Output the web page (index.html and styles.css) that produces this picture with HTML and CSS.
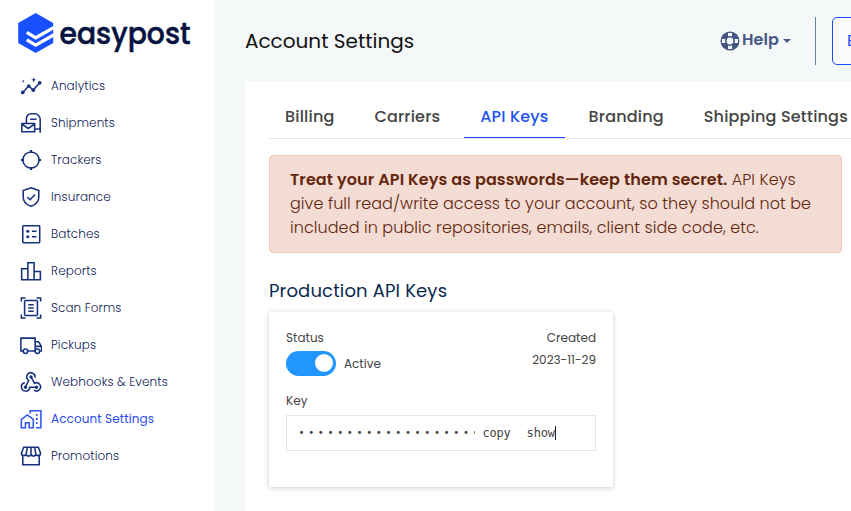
FILE: index.html
```
<!DOCTYPE html>
<html lang="en">
<head>
<meta charset="utf-8">
<title>Account Settings</title>
<link rel="stylesheet" href="styles.css">
</head>
<body>
<div class="app">
  <aside class="sidebar">
    <svg class="logo" width="196" height="56" viewBox="0 0 196 56">
      <path fill="#184fff" d="M35.7 13 53.2 23V43L35.7 53 18.2 43V23Z"/>
      <path fill="none" stroke="#fff" stroke-width="3.3" d="M26.8 32.4 35.7 37.8 54 27.4M26.8 39.9 35.7 45.2 54 34.8"/>
      <text class="wordmark" x="59.5" y="43.5" textLength="131" lengthAdjust="spacingAndGlyphs">easypost</text>
    </svg>
    <nav class="nav">
      <a class="item"><svg class="icon" viewBox="0 0 24 24"><path d="M3 19 9.5 12 14.5 16.500 21.500 8.500"/><g class="solid"><circle cx="3" cy="19" r="2"/><circle cx="9.5" cy="12" r="2"/><circle cx="14.5" cy="16.5" r="2"/><circle cx="21.5" cy="8.5" r="2"/><path d="m15 2.500.8 2 2 .8-2 .8-.8 2-.8-2-2-.8 2-.8ZM3.500 5l.5 1.200 1.200.5L4 7.200 3.500 8.400 3 7.200 1.800 6.700 3 6.200Z"/></g></svg><span>Analytics</span></a>
      <a class="item"><svg class="icon" viewBox="0 0 24 24"><path d="M7 12V7a5 5 0 0 1 5-5h4a6 6 0 0 1 6 6v14.500M11 8h7M16 18.500h6M2 12.500h14v9H2ZM2.500 13.500 9 18l6.500-4.500"/></svg><span>Shipments</span></a>
      <a class="item"><svg class="icon" viewBox="0 0 24 24"><circle cx="12" cy="12" r="8.800"/><path stroke-width="2.400" d="M12 1v3M12 20v3M1 12h3M20 12h3"/></svg><span>Trackers</span></a>
      <a class="item"><svg class="icon" viewBox="0 0 24 24"><path d="m12 2 8.500 3v7c0 5-3.500 8.500-8.500 10.200C7 20.500 3.500 17 3.500 12V5ZM8 12l3 3 5.500-5.800"/></svg><span>Insurance</span></a>
      <a class="item"><svg class="icon" viewBox="0 0 24 24"><rect x="3" y="3" width="18.500" height="18.500" rx="1"/><path d="M13 9h5M13 15h5"/><g class="solid"><circle cx="8.500" cy="9" r="1.700"/><circle cx="8.500" cy="15" r="1.700"/></g></svg><span>Batches</span></a>
      <a class="item"><svg class="icon" viewBox="0 0 24 24"><path d="M1.800 9.500h6.800v12H1.800ZM8.600 3h6.800v18.500H8.600ZM15.400 12.500h6.800v9h-6.800Z"/></svg><span>Reports</span></a>
      <a class="item"><svg class="icon" viewBox="0 0 24 24"><path d="M1.500 5V1H6M18 1h4.500v4M1.500 19v4H6M18 23h4.500v-4"/><rect x="5" y="3.800" width="14" height="16.400" rx="1"/><path d="M9 8.500h6M9 12h6M9 15.500h6"/></svg><span>Scan Forms</span></a>
      <a class="item"><svg class="icon" viewBox="0 0 24 24"><path d="M3.800 18.500H1V4.500h15.500v14H8.500M16.500 8.500h3.700l3.300 5v5h-2M16.500 13.500h7"/><circle cx="6" cy="18.800" r="2.400"/><circle cx="19" cy="18.800" r="2.400"/></svg><span>Pickups</span></a>
      <a class="item"><svg class="icon" viewBox="0 0 24 24"><path d="M16.300 7.200a4.500 4.500 0 1 0-6.800 3L6 17.500M12 6.500l3.800 6.800a4.500 4.500 0 1 1-.6 7.600M5.200 12.800a4.600 4.600 0 1 0 5.500 5h7.300"/><g class="solid"><circle cx="12" cy="6.500" r="1.800"/><circle cx="6" cy="17.700" r="1.800"/><circle cx="18" cy="17.700" r="1.800"/></g></svg><span>Webhooks &amp; Events</span></a>
      <a class="item active"><svg class="icon" viewBox="0 0 24 24"><path d="M1.500 21.500v-9L8 7.500l6.500 5v9H10v-5.500H6v5.500ZM11 6V3h11.800v18.500H17.500"/><path stroke-width="2" d="M18.300 6.500v2M18.300 11v2M18.300 15.500v2"/></svg><span>Account Settings</span></a>
      <a class="item"><svg class="icon" viewBox="0 0 24 24"><path d="M3 11.500v10h18v-10M4 2.500h16l2.300 6a2.500 2.500 0 0 1-5.100 1 2.600 2.600 0 0 1-5.200 0 2.600 2.600 0 0 1-5.200 0 2.500 2.500 0 0 1-5.100-1ZM8 2.500l-1.200 7M12 2.500v7M16 2.500l1.200 7"/></svg><span>Promotions</span></a>
    </nav>
  </aside>
  <main class="main">
    <header class="topbar">
      <h1>Account Settings</h1>
      <div class="help">
        <svg width="20" height="20" viewBox="0 0 20 20"><circle cx="10" cy="10" r="9.500" fill="#465783"/><path stroke="#f4f8f9" stroke-width="4" d="M10 2v4M10 14v4M2 10h4M14 10h4"/><circle cx="10" cy="10" r="4.200" fill="#f4f8f9" stroke="#465783" stroke-width="1.600"/></svg>
        <span>Help</span>
        <i class="caret"></i>
      </div>
      <div class="divider"></div>
      <div class="button">E</div>
    </header>
    <section class="panel">
      <div class="tabs">
        <a class="tab">Billing</a>
        <a class="tab">Carriers</a>
        <a class="tab selected">API Keys</a>
        <a class="tab">Branding</a>
        <a class="tab">Shipping Settings</a>
      </div>
      <div class="alert"><strong>Treat your API Keys as passwords—keep them secret.</strong> API Keys give full read/write access to your account, so they should not be included in public repositories, emails, client side code, etc.</div>
      <h2>Production API Keys</h2>
      <div class="card">
        <div class="row">
          <div>
            <div>Status</div>
            <div class="switch-row"><span class="switch"></span><span>Active</span></div>
          </div>
          <div class="created"><div>Created</div><div class="date">2023-11-29</div></div>
        </div>
        <div class="key-label">Key</div>
        <div class="key">
          <span class="dots">•••••••••••••••••••</span>
          <span class="copy">copy</span>
          <span class="show">show</span>
        </div>
      </div>
    </section>
  </main>
</div>
</body>
</html>
```
FILE: styles.css
```
* { box-sizing: border-box; }
body {
  margin: 0;
  font-family: Poppins, Inter, "Open Sans", sans-serif;
  background: #f4f8f9;
  color: #444;
  overflow: hidden;
}
.app { display: flex; width: 851px; height: 511px; overflow: hidden; }
.sidebar { width: 214px; flex: none; background: #fff; }
.logo { display: block; }
.wordmark { font-size: 31px; font-weight: 500; fill: #061340; stroke: #061340; stroke-width: .5px; }
.nav { padding-top: 11.5px; }
.item {
  display: flex;
  align-items: center;
  height: 37px;
  padding-left: 20px;
  gap: 9px;
  font-size: 12px;
  font-weight: 300;
  letter-spacing: .1px;
  color: #101c58;
  white-space: nowrap;
}
.icon {
  width: 22px;
  height: 22px;
  flex: none;
  fill: none;
  stroke: #16307c;
  stroke-width: 1.7;
}
.icon .solid { fill: #16307c; stroke: none; }
.item.active { color: #2a4bf5; font-weight: 400; }
.item.active .icon { stroke: #3157f5; }

.main { flex: 1; min-width: 0; padding-left: 31px; overflow: hidden; }
.topbar { display: flex; height: 81px; padding-top: 17px; }
h1 {
  margin: 0;
  width: 475px;
  flex: none;
  font-size: 20px;
  font-weight: 400;
  line-height: 48px;
  color: #111;
}
.help {
  display: flex;
  align-items: center;
  width: 95px;
  height: 48px;
  flex: none;
  font-size: 16px;
  font-weight: 600;
  letter-spacing: .1px;
  line-height: 46px;
  color: #465783;
}
.help span { margin-left: 2px; height: 48px; }
.caret {
  margin-left: 4px;
  border: 4.5px solid transparent;
  border-top-color: #465783;
  border-bottom: 0;
}
.divider { width: 1px; height: 48px; flex: none; background: #6b80ab; }
.button {
  width: 120px;
  height: 48px;
  flex: none;
  margin-left: 16px;
  padding-left: 14px;
  border: 1px solid #184fff;
  border-radius: 5px;
  background: #f9fbfc;
  color: #184fff;
  font-size: 16px;
  line-height: 46px;
}
.panel { height: 430px; padding-left: 24px; background: #fff; }
.tabs {
  display: flex;
  gap: 8px;
  height: 58px;
  border-bottom: 1px solid #e1e6f2;
  padding-top: 12px;
}
.tab {
  height: 45px;
  flex: none;
  padding: 0 16px;
  font-size: 16px;
  font-weight: 500;
  letter-spacing: .18px;
  line-height: 47px;
  white-space: nowrap;
}
.selected { color: #2152f5; border-bottom: 1px solid #2152f5; }
.alert {
  width: 573px;
  height: 98px;
  margin-top: 16px;
  padding: 12px 20px;
  border: 1px solid #efcabd;
  border-radius: 4px;
  background: #f3dcd3;
  color: #63260c;
  font-size: 16px;
  font-weight: 300;
  letter-spacing: .07px;
  line-height: 24px;
}
.alert strong { font-weight: 600; letter-spacing: .1px; }
h2 {
  margin: 26px 0 9px;
  font-size: 18px;
  line-height: 24px;
  font-weight: 400;
  letter-spacing: .15px;
  color: #08294f;
}
.card {
  width: 344px;
  height: 175px;
  padding: 17px;
  background: #fff;
  box-shadow: 0 1px 5px rgba(0, 0, 0, .2);
  font-size: 12px;
  line-height: 18px;
}
.row { display: flex; justify-content: space-between; }
.switch-row { display: flex; align-items: center; gap: 8px; margin-top: 4px; }
.switch {
  display: flex;
  justify-content: flex-end;
  width: 50px;
  height: 25px;
  padding: 3px;
  border-radius: 13px;
  background: #2196ff;
}
.switch::after { content: ""; width: 18px; height: 18px; border-radius: 50%; background: #fff; }
.created { text-align: right; }
.date { margin-top: 4px; }
.key-label { margin-top: 16px; }
.key {
  display: flex;
  height: 36px;
  margin-top: 5px;
  padding-left: 11.5px;
  border: 1px solid #e1e8ed;
  font: 12px/34px "DejaVu Sans Mono", monospace;
  letter-spacing: -.2px;
}
.dots {
  width: 176px;
  overflow: hidden;
  white-space: nowrap;
  font-size: 10px;
  letter-spacing: 3.65px;
}
.copy { margin-left: 8px; }
.show { height: 14px; margin: 10px 0 0 16px; line-height: 15px; border-right: 1px solid #222; }
```
